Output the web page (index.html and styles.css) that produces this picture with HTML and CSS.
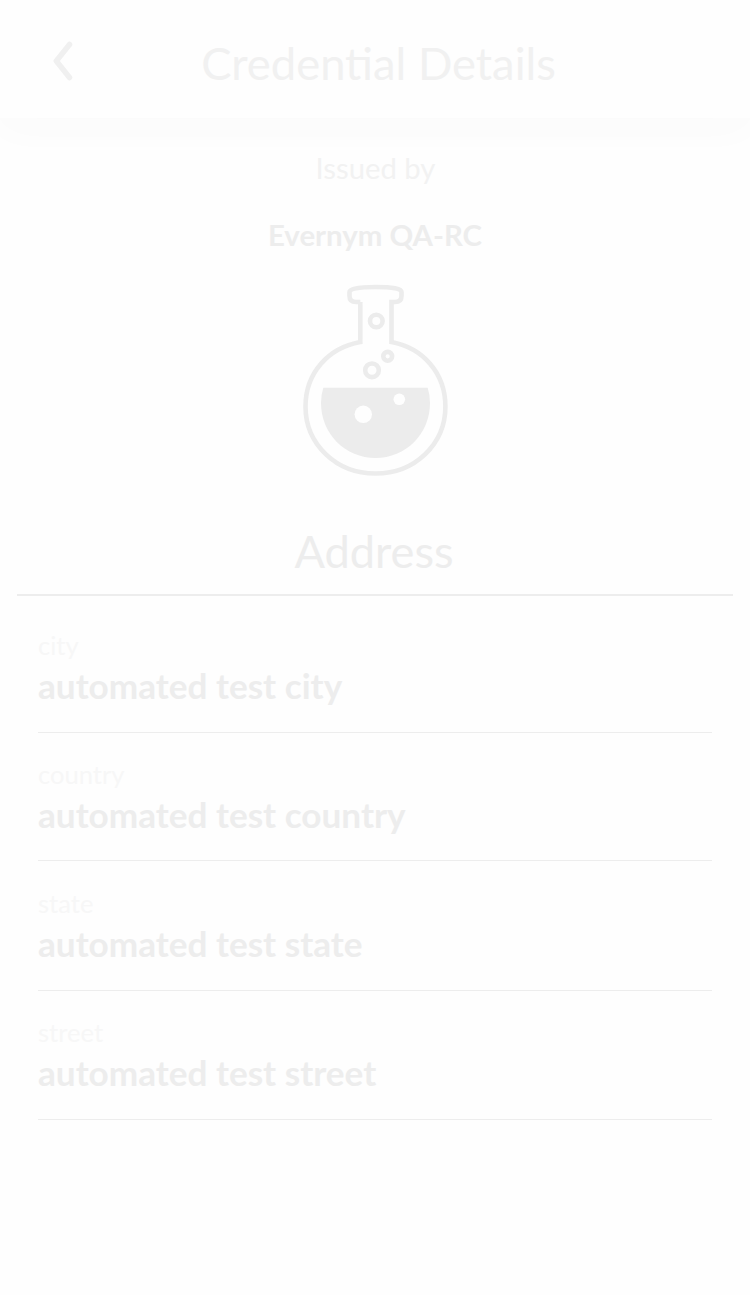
FILE: index.html
```html
<!DOCTYPE html>
<html lang="en">
<head>
<meta charset="utf-8">
<title>Credential Details</title>
<link rel="stylesheet" href="styles.css">
</head>
<body>
<header class="header">
  <svg class="back" viewBox="0 0 20 40" aria-label="Back"><path d="M16.500 3.500 3.300 20l13.200 16.500"/></svg>
  <h1 class="title">Credential Details</h1>
</header>
<main>
  <section class="issuer">
    <p class="label">Issued by</p>
    <p class="name">Evernym QA-RC</p>
    <svg class="flask" viewBox="0 0 146 192">
      <g class="outline">
        <path d="M58.300 17V57C26 63 3.500 88 3.500 121.500C3.500 159 34 188.500 73.500 188.500S143.400 159 143.400 121.500C143.400 88 121 63 89.500 57V17H93Q99.500 17 99.500 11V7Q99.500 2 73.500 2T47.500 7V11Q47.500 17 54 17H58.300"/>
        <circle cx="74.300" cy="36" r="6.300"/><circle cx="85.700" cy="71.300" r="4.400"/><circle cx="70" cy="85.300" r="6.800"/>
      </g>
      <path class="liquid" d="M21.300 102.700H125.700Q128 110 128 118C128 149 103.500 173 73.500 173S19 149 19 118Q19 110 21.300 102.700Z"/>
      <circle class="bubble" cx="61.300" cy="129.300" r="8.700"/><circle class="bubble" cx="97.300" cy="114.300" r="5.800"/>
    </svg>
  </section>
  <h2 class="credential">Address</h2>
  <dl class="fields">
    <div class="field"><dt>city</dt><dd>automated test city</dd></div>
    <div class="field"><dt>country</dt><dd>automated test country</dd></div>
    <div class="field"><dt>state</dt><dd>automated test state</dd></div>
    <div class="field"><dt>street</dt><dd>automated test street</dd></div>
  </dl>
</main>
</body>
</html>
```
FILE: styles.css
```css
* { box-sizing: border-box; }
body { margin: 0; background: #fefefe; color: #ededed; font-family: Lato, sans-serif; min-height: 1295px; }
h1, h2, p, dl, dd { margin: 0; }
.header { height: 118px; display: grid; grid-template-columns: 100px 1fr 93px; align-items: center; background: #fefefe; box-shadow: 0 10px 40px #fafafa; padding-top: 8px; }
.back { width: 20px; height: 40px; margin: -4px 0 0 52.5px; fill: none; stroke: #f0f0f0; stroke-width: 5.5; stroke-linecap: round; stroke-linejoin: round; }
.title { text-align: center; font-size: 45.35px; line-height: 56px; padding-bottom: 1px; font-weight: 400; white-space: nowrap; color: #f1f1f1; }
.issuer { display: flex; flex-direction: column; align-items: center; padding-top: 32px; }
.label { padding-left: 1px; font-size: 29.3px; line-height: 36px; color: #f2f2f2; }
.name { font-size: 29.4px; line-height: 36px; margin-top: 31px; font-weight: 700; }
.flask { width: 146px; height: 192px; margin-top: 32px; overflow: visible; }
.outline { fill: none; stroke: #ececec; stroke-width: 4.6; }
.liquid { fill: #ececec; }
.bubble { fill: #fefefe; }
.credential { margin: 37px 17px 0; padding: 9px 2px 15px 0; border-bottom: 2px solid #ededed; text-align: center; font-size: 45.2px; line-height: 56px; font-weight: 400; }
.fields { margin: 8px 38px 0; }
.field { height: 129px; padding-top: 25px; border-bottom: 1px solid #ededed; }
.field:nth-child(2) { height: 128px; }
.field:nth-child(3) { height: 130px; padding-top: 26px; }
dt { font-size: 25.6px; line-height: 32px; color: #f7f7f7; }
dd { margin-top: 2px; font-size: 35.15px; line-height: 44px; font-weight: 700; }
```
